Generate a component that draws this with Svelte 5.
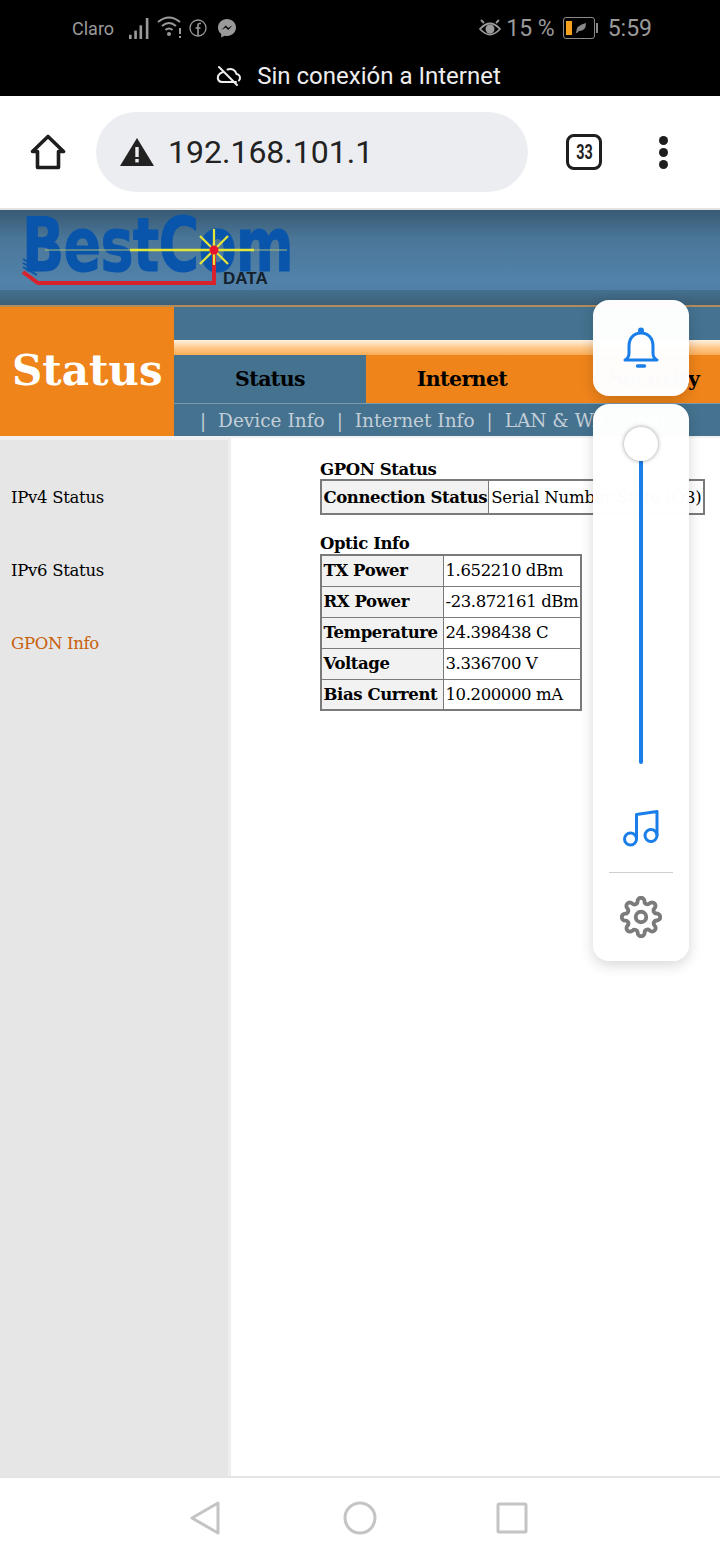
<script lang="ts">
  const tabs = [
    { label: 'Status', active: false },
    { label: 'Internet', active: true },
    { label: 'Security', active: true }
  ];
  const subLinks = ['Device Info', 'Internet Info', 'LAN & WAN Info'];
  const sideLinks = [
    { label: 'IPv4 Status', current: false },
    { label: 'IPv6 Status', current: false },
    { label: 'GPON Info', current: true }
  ];
  const optic = [
    ['TX Power', '1.652210 dBm'],
    ['RX Power', '-23.872161 dBm'],
    ['Temperature', '24.398438 C'],
    ['Voltage', '3.336700 V'],
    ['Bias Current', '10.200000 mA']
  ];
</script>

<div class="phone">
  <div class="statusbar">
    <div class="status-row">
      <div class="status-left">
        <span class="carrier">Claro</span>
        <svg class="i-signal" viewBox="0 0 20 20" width="21" height="21" fill="#9a9a9a">
          <rect x="0" y="16" width="2.500" height="4" />
          <rect x="5" y="12" width="2.500" height="8" />
          <rect x="10" y="7" width="2.500" height="13" />
          <rect x="16" y="0" width="2.500" height="20" />
        </svg>
        <svg class="i-wifi" viewBox="0 0 26 22" width="26" height="22" fill="none" stroke="#9a9a9a" stroke-width="2">
          <path d="M1 6 Q12 -3 23 6" />
          <path d="M5 10 Q12 4 19 10" />
          <path d="M8.5 14 Q12 11 15.500 14" />
          <circle cx="12" cy="18" r="2" fill="#9a9a9a" stroke="none" />
          <path d="M23 12 V18 M23 20 V22" />
        </svg>
        <svg class="i-fb" viewBox="0 0 18 18" width="18" height="18" fill="none" stroke="#9a9a9a" stroke-width="1.300">
          <circle cx="9" cy="9" r="8" />
          <path d="M12 4.500 H10.500 Q9 4.500 9 6.500 V16.500 M6.500 9 H11.500" stroke-width="1.600" />
        </svg>
        <svg class="i-ms" viewBox="0 0 18 19" width="18" height="19">
          <path d="M9 0 C4 0 0 3.700 0 8.500 C0 11.200 1.200 13.400 3.200 14.900 V18.500 L6.500 16.700 Q7.700 17 9 17 C14 17 18 13.300 18 8.500 C18 3.700 14 0 9 0 Z" fill="#9a9a9a" />
          <path d="M3.500 11 L7.800 6.500 L10.200 9 L14.500 6.300 L10.300 11 L7.800 8.500 Z" fill="#000" />
        </svg>
      </div>
      <div class="status-right">
        <svg class="i-eye" viewBox="0 0 24 18" width="24" height="18" fill="none" stroke="#9a9a9a" stroke-width="1.800">
          <path d="M2 10 Q12 -1 22 10 Q12 21 2 10 Z" />
          <circle cx="12" cy="10" r="4.500" fill="#9a9a9a" stroke="none" />
          <path d="M3 1 L6 4 M21 1 L18 4" />
        </svg>
        <span class="pct">15 %</span>
        <div class="battery">
          <div class="battery-body">
            <span class="battery-fill"></span>
            <svg viewBox="0 0 12 12" width="12" height="12"><path d="M1 11 Q1 3 11 1 Q11 9 4 9 L2 11 Z" fill="#8a8a8a" /></svg>
          </div>
          <span class="battery-cap"></span>
        </div>
        <span class="clock">5:59</span>
      </div>
    </div>
    <div class="offline">
      <svg viewBox="0 0 26 22" width="26" height="22" fill="none" stroke="#eeeeee" stroke-width="2" stroke-linecap="round" stroke-linejoin="round">
        <path d="M7 7 Q3.500 8 2 11 C1 15 3.500 17 6 17 H20 M23 15.500 C25 13 24 9.500 20.500 9 C19.500 5 15.500 3 11.500 4.500" />
        <path d="M3 2 L21 20" />
      </svg>
      <span>Sin conexión a Internet</span>
    </div>
  </div>

  <div class="toolbar">
    <svg class="home" viewBox="0 0 36 36" width="36" height="36" fill="none" stroke="#1e1e1e" stroke-width="3.600" stroke-linejoin="round">
      <path d="M18 2.500 L33.500 17.500 H28.500 V33.500 H7.500 V17.500 H2.500 Z" />
    </svg>
    <div class="omnibox">
      <svg viewBox="0 0 34 28" width="34" height="28">
        <path d="M17 0 L34 28 H0 Z" fill="#222" />
        <rect x="15.300" y="9" width="3.400" height="10" fill="#ebedf0" />
        <rect x="15.300" y="21" width="3.400" height="3.400" fill="#ebedf0" />
      </svg>
      <span>192.168.101.1</span>
    </div>
    <div class="tabcount"><span>33</span></div>
    <div class="menu-dots"><i></i><i></i><i></i></div>
  </div>

  <div class="banner">
    <div class="logo">
      <span class="logo-word">BestCom</span>
      <span class="logo-data">DATA</span>
      <svg class="logo-art" viewBox="0 0 270 75" width="270" height="75" fill="none">
        <path d="M1 44 L15 52 M1 48 L15 56 M1 52 L15 60" stroke="#0a55ac" stroke-width="2" />
        <path d="M1 57 L16 68 H192 V35" stroke="#d8232f" stroke-width="4" />
        <path d="M23 35 H265" stroke="#a9bc78" stroke-width="1" />
        <path d="M108 35 H232" stroke="#e4e63a" stroke-width="2.500" />
        <path d="M192 14 V50 M178 21 L206 49 M206 21 L178 49" stroke="#e4e63a" stroke-width="2.200" />
        <circle cx="192" cy="35" r="4.500" fill="#e8152c" />
      </svg>
    </div>
    <div class="banner-band"></div>
  </div>

  <div class="nav">
    <div class="nav-title">Status</div>
    <div class="nav-main">
      <div class="nav-top"></div>
      <div class="nav-glow"></div>
      <div class="nav-tabs">
        {#each tabs as tab}
          <div class="nav-tab" class:active={tab.active}>{tab.label}</div>
        {/each}
      </div>
      <div class="nav-sub">
        {#each subLinks as link}
          <span class="sep">|</span><span>{link}</span>
        {/each}
      </div>
    </div>
  </div>

  <div class="body">
    <aside class="side">
      {#each sideLinks as link}
        <div class="side-link" class:current={link.current}>{link.label}</div>
      {/each}
    </aside>
    <main class="content">
      <div class="block-title first">GPON Status</div>
      <table class="gpon">
        <tbody>
          <tr>
            <th>Connection Status</th>
            <td>Serial Number State (O3)</td>
          </tr>
        </tbody>
      </table>
      <div class="block-title">Optic Info</div>
      <table class="opticinfo">
        <tbody>
          {#each optic as row}
            <tr>
              <th>{row[0]}</th>
              <td>{row[1]}</td>
            </tr>
          {/each}
        </tbody>
      </table>
    </main>
  </div>

  <div class="navbar">
    <svg viewBox="0 0 30 34" width="30" height="34" fill="none" stroke="#c4c4c4" stroke-width="3" stroke-linejoin="round">
      <path d="M28 2 V32 L2 17 Z" />
    </svg>
    <svg class="nav-home" viewBox="0 0 34 34" width="34" height="34" fill="none" stroke="#c4c4c4" stroke-width="3">
      <circle cx="17" cy="17" r="15" />
    </svg>
    <svg class="nav-recent" viewBox="0 0 32 32" width="32" height="32" fill="none" stroke="#c4c4c4" stroke-width="3" stroke-linejoin="round">
      <rect x="2" y="2" width="28" height="28" rx="1" />
    </svg>
  </div>

  <div class="float-bell">
    <svg viewBox="0 0 36 42" width="36" height="42" fill="none" stroke="#1a7eea" stroke-width="3" stroke-linecap="round" stroke-linejoin="round">
      <path d="M2 33 Q6 31 6 26 V19 C6 11 11 6 18 6 C25 6 30 11 30 19 V26 Q30 31 34 33 Z" />
      <circle cx="18" cy="3.500" r="1.500" fill="#1a7eea" />
      <path d="M14.500 39 H21.500" stroke-width="3.500" />
    </svg>
  </div>

  <div class="float-panel">
    <div class="slider">
      <div class="slider-track"></div>
      <div class="slider-knob"></div>
    </div>
    <svg class="note" viewBox="0 0 40 40" width="40" height="40" fill="none" stroke="#1a7eea" stroke-width="3" stroke-linejoin="round">
      <circle cx="9.500" cy="31" r="6" />
      <circle cx="30" cy="27.500" r="6" />
      <path d="M15.500 31 V6.500 L36 3.500 V27.500" />
    </svg>
    <div class="panel-rule"></div>
    <svg class="gear" viewBox="0 0 24 24" width="42" height="42" fill="none" stroke="#7b7b7b" stroke-width="2.200" stroke-linejoin="round">
      <circle cx="12" cy="12" r="3" />
      <path d="M19.4 15a1.650 1.650 0 0 0 .33 1.820l.06.06a2 2 0 0 1 0 2.830 2 2 0 0 1-2.830 0l-.06-.06a1.650 1.650 0 0 0-1.820-.33 1.650 1.650 0 0 0-1 1.510V21a2 2 0 0 1-2 2 2 2 0 0 1-2-2v-.09A1.650 1.650 0 0 0 9 19.400a1.650 1.650 0 0 0-1.820.33l-.06.06a2 2 0 0 1-2.830 0 2 2 0 0 1 0-2.830l.06-.06a1.650 1.650 0 0 0 .33-1.820 1.650 1.650 0 0 0-1.510-1H3a2 2 0 0 1-2-2 2 2 0 0 1 2-2h.09A1.650 1.650 0 0 0 4.600 9a1.650 1.650 0 0 0-.33-1.820l-.06-.06a2 2 0 0 1 0-2.830 2 2 0 0 1 2.830 0l.06.06a1.650 1.650 0 0 0 1.820.33H9a1.650 1.650 0 0 0 1-1.510V3a2 2 0 0 1 2-2 2 2 0 0 1 2 2v.09a1.650 1.650 0 0 0 1 1.510 1.650 1.650 0 0 0 1.820-.33l.06-.06a2 2 0 0 1 2.830 0 2 2 0 0 1 0 2.830l-.06.06a1.650 1.650 0 0 0-.33 1.820V9a1.650 1.650 0 0 0 1.510 1H21a2 2 0 0 1 2 2 2 2 0 0 1-2 2h-.09a1.650 1.650 0 0 0-1.510 1z" />
    </svg>
  </div>
</div>

<style>
  :global(body) {
    margin: 0;
    background: #fff;
  }

  .phone {
    position: relative;
    width: 720px;
    height: 1560px;
    overflow: hidden;
    display: flex;
    flex-direction: column;
    font-family: "DejaVu Serif", "Liberation Serif", serif;
    color: #000;
  }

  /* status bar */
  .statusbar {
    height: 96px;
    background: #000;
    font-family: Roboto, "Liberation Sans", sans-serif;
    color: #9a9a9a;
    flex-shrink: 0;
  }

  .status-row {
    height: 56px;
    display: flex;
    align-items: center;
    justify-content: space-between;
    padding: 0 68px 0 72px;
  }

  .status-left,
  .status-right {
    display: flex;
    align-items: center;
  }

  .carrier {
    font-size: 18px;
    margin-right: 15px;
  }

  .i-wifi {
    margin-left: 7px;
    margin-top: -2px;
  }

  .i-fb {
    margin-left: 6px;
  }

  .i-ms {
    margin-left: 11px;
  }

  .pct {
    font-size: 23px;
    margin-left: 4px;
  }

  .clock {
    font-size: 23px;
    margin-left: 10px;
  }

  .battery {
    display: flex;
    align-items: center;
    margin-left: 8px;
  }

  .battery-body {
    width: 26px;
    height: 16px;
    border: 1.500px solid #8a8a8a;
    border-radius: 3px;
    padding: 2px;
    display: flex;
    align-items: center;
    gap: 3px;
  }

  .battery-fill {
    width: 6px;
    height: 14px;
    background: #f7a01d;
  }

  .battery-cap {
    width: 2px;
    height: 10px;
    margin-left: 1px;
    background: #8a8a8a;
  }

  .offline {
    height: 40px;
    display: flex;
    align-items: center;
    justify-content: center;
    gap: 15px;
    padding-right: 3px;
    color: #eeeeee;
    font-size: 24px;
  }

  /* browser toolbar */
  .toolbar {
    height: 114px;
    flex-shrink: 0;
    background: #fff;
    border-bottom: 2px solid #e2e4e4;
    box-sizing: border-box;
    display: flex;
    align-items: center;
    padding-left: 30px;
    font-family: Roboto, "Liberation Sans", sans-serif;
  }

  .omnibox {
    width: 432px;
    height: 80px;
    margin-left: 30px;
    padding-left: 24px;
    box-sizing: border-box;
    background: #ebedf0;
    border-radius: 40px;
    display: flex;
    align-items: center;
    gap: 14px;
    color: #222;
    font-size: 32px;
  }

  .tabcount {
    width: 36px;
    height: 36px;
    margin-left: 38px;
    box-sizing: border-box;
    border: 3.500px solid #1e1e1e;
    border-radius: 8px;
    display: flex;
    align-items: center;
    justify-content: center;
    font-size: 20px;
    font-weight: 700;
    color: #1e1e1e;
  }

  .tabcount span {
    display: inline-block;
    transform: scaleX(0.72);
  }

  .menu-dots {
    margin-left: 57px;
    display: flex;
    flex-direction: column;
    gap: 3px;
  }

  .menu-dots i {
    width: 9px;
    height: 9px;
    border-radius: 50%;
    background: #1e1e1e;
  }

  /* router page header */
  .banner {
    height: 97px;
    flex-shrink: 0;
    display: flex;
    flex-direction: column;
    background: linear-gradient(#385a74, #4a7698 30%, #5282aa 75%, #4a7a9e);
    border-bottom: 2px solid #b18d5e;
    box-sizing: border-box;
  }

  .logo {
    position: relative;
    width: 270px;
    height: 80px;
    margin-left: 22px;
  }

  .logo-word {
    display: block;
    font-family: "DejaVu Sans", sans-serif;
    font-weight: 700;
    font-size: 74px;
    line-height: 52px;
    letter-spacing: -1px;
    color: #0a55ac;
    -webkit-text-stroke: 1px #0a55ac;
    white-space: nowrap;
    transform: scaleX(0.75);
    transform-origin: left top;
    margin-top: 9px;
  }

  .logo-data {
    position: absolute;
    left: 201px;
    top: 62px;
    font-family: "Liberation Sans", sans-serif;
    font-weight: 700;
    font-size: 17px;
    line-height: 14px;
    color: #14202c;
  }

  .logo-art {
    position: absolute;
    left: 0;
    top: 5px;
  }

  .banner-band {
    flex: 1;
    background: linear-gradient(#44708f, #3d6078);
  }

  .nav {
    height: 129px;
    flex-shrink: 0;
    display: flex;
  }

  .nav-title {
    width: 174px;
    flex-shrink: 0;
    background: #ef841a;
    color: #fff;
    font-size: 42px;
    font-weight: 700;
    display: flex;
    align-items: center;
    padding-left: 12px;
    padding-bottom: 2px;
    box-sizing: border-box;
  }

  .nav-main {
    flex: 1;
    min-width: 0;
    display: flex;
    flex-direction: column;
    background: #44728f;
    overflow: hidden;
  }

  .nav-top {
    height: 33px;
  }

  .nav-glow {
    height: 15px;
    background: linear-gradient(#fff2e4, #ffc98c 50%, #fbad55);
  }

  .nav-tabs {
    height: 48px;
    display: flex;
    border-bottom: 1px solid #7d9bb0;
  }

  .nav-tab {
    width: 192px;
    flex-shrink: 0;
    display: flex;
    align-items: center;
    justify-content: center;
    font-size: 20.500px;
    font-weight: 700;
    letter-spacing: -0.6px;
  }

  .nav-tab.active {
    background: #ef841a;
  }

  .nav-sub {
    flex: 1;
    display: flex;
    align-items: center;
    white-space: nowrap;
    padding-left: 26px;
    gap: 12px;
    color: #c3ced8;
    font-size: 18.500px;
  }

  .sep {
    font-size: 18px;
  }

  /* sidebar and tables */
  .body {
    flex: 1;
    min-height: 0;
    display: flex;
  }

  .side {
    width: 231px;
    flex-shrink: 0;
    box-sizing: border-box;
    background: #e6e6e6;
    border-top: 4px solid #f0f0f0;
    border-right: 3px solid #eeeeee;
    padding: 48px 0 0 11px;
    display: flex;
    flex-direction: column;
    gap: 53px;
    font-size: 16.500px;
    letter-spacing: -0.3px;
  }

  .side-link {
    line-height: 20px;
  }

  .side-link.current {
    color: #c8600a;
  }

  .content {
    flex: 1;
    padding-left: 89px;
    background: #fff;
    border-top: 2px solid #f2f2f2;
  }

  .block-title {
    font-size: 16.500px;
    font-weight: 700;
    line-height: 20px;
    margin-top: 19px;
    letter-spacing: -0.4px;
  }

  .block-title.first {
    margin-top: 22px;
    line-height: 19px;
  }

  table {
    border-collapse: collapse;
    font-size: 16.500px;
    letter-spacing: -0.4px;
    white-space: nowrap;
    border: 2px solid #7a7a7a;
  }

  th,
  td {
    border: 1.500px solid #7a7a7a;
    padding: 0 2px;
    text-align: left;
  }

  th {
    background: #f2f2f2;
    font-weight: 700;
    padding: 0 1px 0 1.500px;
  }

  td {
    background: #fff;
  }

  .gpon tr {
    height: 34px;
  }

  .gpon td {
    letter-spacing: -0.2px;
  }

  .opticinfo tr {
    height: 31px;
  }

  .opticinfo th {
    min-width: 118px;
  }

  /* system nav bar */
  .navbar {
    height: 84px;
    flex-shrink: 0;
    box-sizing: border-box;
    background: #fff;
    border-top: 2px solid #e4e4e4;
    display: flex;
    align-items: center;
    padding-left: 190px;
    padding-bottom: 2px;
  }

  .nav-home {
    margin-left: 123px;
  }

  .nav-recent {
    margin-left: 119px;
  }

  /* floating assistant panels over the page */
  .float-bell,
  .float-panel {
    position: absolute;
    left: 593px;
    width: 96px;
    background: rgba(255, 255, 255, 0.985);
    border-radius: 16px;
    box-shadow: 0 4px 14px rgba(0, 0, 0, 0.16);
  }

  .float-bell {
    top: 300px;
    height: 96px;
    display: flex;
    align-items: center;
    justify-content: center;
  }

  .float-panel {
    top: 404px;
    height: 557px;
    display: flex;
    flex-direction: column;
    align-items: center;
  }

  .slider {
    position: relative;
    width: 34px;
    height: 360px;
    flex-shrink: 0;
    display: flex;
    justify-content: center;
  }

  .slider-track {
    width: 4px;
    height: 320px;
    margin-top: 40px;
    background: #1a7eea;
    border-radius: 2px;
  }

  .slider-knob {
    position: absolute;
    top: 23px;
    left: 0;
    width: 34px;
    height: 34px;
    border-radius: 50%;
    background: #fff;
    box-shadow: 0 0 4px rgba(0, 0, 0, 0.4);
  }

  .note {
    margin-top: 44px;
  }

  .panel-rule {
    width: 64px;
    height: 1px;
    background: #cfcfcf;
    margin-top: 24px;
  }

  .gear {
    margin-top: 23px;
  }
</style>
